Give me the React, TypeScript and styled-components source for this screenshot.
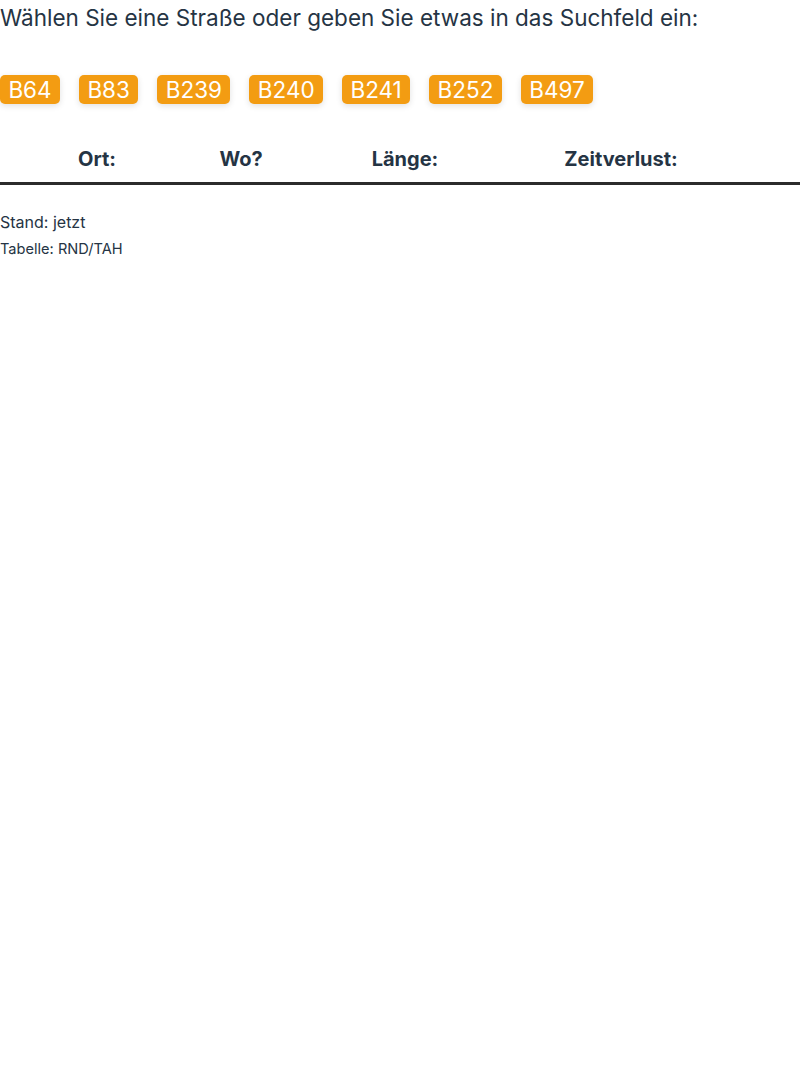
import React from "react";
import styled, { createGlobalStyle } from "styled-components";

const Global = createGlobalStyle`
  html, body { margin: 0; padding: 0; background: #fff; }
  body { font-family: Inter, "Noto Sans", sans-serif; color: #253444; }
`;

const Page = styled.div`
  display: flex;
  flex-direction: column;
  width: 800px;
`;

const Intro = styled.p`
  margin: 0;
  font-size: 22.5px;
  line-height: 36px;
  font-weight: 400;
  color: #253444;
`;

const ButtonRow = styled.div`
  display: flex;
  gap: 19px;
  margin-top: 39px;
`;

const RoadButton = styled.button`
  font-family: Inter, sans-serif;
  font-size: 22.5px;
  line-height: 29px;
  height: 29px;
  padding: 0 8.4px;
  border: none;
  border-radius: 5px;
  background: #f39c12;
  color: #fff;
  box-shadow: 0 2px 6px rgba(0, 0, 0, 0.12);
  cursor: pointer;
`;

const Table = styled.div`
  margin-top: 33px;
  display: grid;
  grid-template-columns: 194px 94px 234px 198px 1fr;
  border-bottom: 3px solid #2b2b2b;
`;

const HeadCell = styled.div`
  font-size: 20px;
  font-weight: 700;
  line-height: 24px;
  text-align: center;
  padding: 10px 0 11px;
  color: #253444;
`;

const Footer = styled.div`
  margin-top: 25px;
  display: flex;
  flex-direction: column;
`;

const Note = styled.div<{ $size: number; $lh: number }>`
  font-size: ${(p) => p.$size}px;
  line-height: ${(p) => p.$lh}px;
  color: #253444;
`;

const roads = ["B64", "B83", "B239", "B240", "B241", "B252", "B497"];

export default function App() {
  return (
    <Page>
      <Global />
      <Intro>Wählen Sie eine Straße oder geben Sie etwas in das Suchfeld ein:</Intro>
      <ButtonRow>
        {roads.map((r) => (
          <RoadButton key={r}>{r}</RoadButton>
        ))}
      </ButtonRow>
      <Table>
        <HeadCell>Ort:</HeadCell>
        <HeadCell>Wo?</HeadCell>
        <HeadCell>Länge:</HeadCell>
        <HeadCell>Zeitverlust:</HeadCell>
        <HeadCell />
      </Table>
      <Footer>
        <Note $size={16} $lh={24}>Stand: jetzt</Note>
        <Note $size={14.6} $lh={30}>Tabelle: RND/TAH</Note>
      </Footer>
    </Page>
  );
}
